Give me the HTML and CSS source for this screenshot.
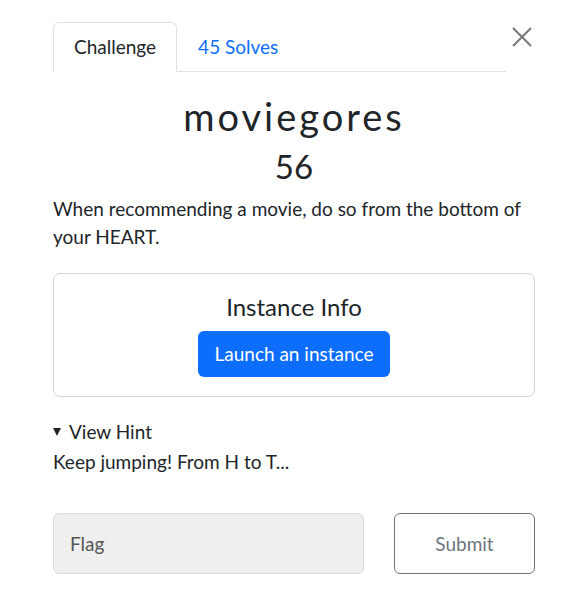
FILE: index.html
```html
<!DOCTYPE html>
<html>
<head>
<meta charset="utf-8">
<link rel="stylesheet" href="styles.css">
</head>
<body>
<div class="modal">
  <div class="top">
    <ul class="tabs">
      <li class="tab active">Challenge</li>
      <li class="tab link">45 Solves</li>
    </ul>
    <button class="close" aria-label="Close">
      <svg width="20" height="20" viewBox="0 0 20 20"><path d="M1 1 L19 19 M19 1 L1 19" stroke="#777" stroke-width="2" fill="none"/></svg>
    </button>
  </div>
  <h2 class="name">moviegores</h2>
  <h3 class="value">56</h3>
  <p class="desc">When recommending a movie, do so from the bottom of your HEART.</p>
  <div class="card">
    <h4 class="card-title">Instance Info</h4>
    <button class="btn-primary">Launch an instance</button>
  </div>
  <details class="hint" open>
    <summary>View Hint</summary>
    <p>Keep jumping! From H to T...</p>
  </details>
  <div class="submit-row">
    <div class="flag">Flag</div>
    <button class="btn-submit">Submit</button>
  </div>
</div>
</body>
</html>
```
FILE: styles.css
```css
html, body { margin: 0; padding: 0; background: #fff; }
body { font-family: Lato, "Open Sans", sans-serif; font-size: 19px; color: #212529; }
.modal { padding: 22px 45px 0 53px; }
.top { display: flex; align-items: flex-start; }
.tabs { list-style: none; margin: 0; padding: 0; display: flex; flex: 0 0 453px; border-bottom: 1px solid #dee2e6; }
.tab { padding: 10px 20px 11px; line-height: 27px; border: 1px solid transparent; margin-bottom: -1px; }
.tab.active { border-color: #dee2e6 #dee2e6 #fff; border-radius: 6px 6px 0 0; color: #212529; }
.tab.link { color: #0d6efd; }
.close { margin: 5px 0 0 6px; padding: 0; border: 0; background: none; width: 20px; height: 20px; display: block; }
.close svg { display: block; }
.name { margin: 22px 0 0; text-align: center; font-size: 38px; font-weight: 400; letter-spacing: 3px; line-height: 44px; }
.value { margin: 9px 0 0; text-align: center; font-size: 33px; font-weight: 400; line-height: 38px; }
.desc { margin: 10px 0 0; line-height: 28px; }
.card { margin-top: 22px; border: 1px solid #d3d3d3; border-radius: 7px; padding: 17px 16px 19px; display: flex; flex-direction: column; align-items: center; }
.card-title { margin: 0; font-size: 24px; font-weight: 400; line-height: 32px; }
.btn-primary { margin-top: 8px; background: #0d6efd; color: #fff; border: 0; border-radius: 6px; font-family: inherit; font-size: 19px; line-height: 28px; padding: 9px 16px; }
.hint { margin-top: 21px; }
.hint summary { line-height: 28px; cursor: pointer; list-style: none; display: flex; align-items: center; }
.hint summary::-webkit-details-marker { display: none; }
.hint summary::before { content: ""; width: 0; height: 0; border-left: 4.5px solid transparent; border-right: 4.5px solid transparent; border-top: 8px solid #212529; margin-right: 8px; }
.hint p { margin: 2px 0 0; line-height: 28px; }
.submit-row { display: flex; margin-top: 37px; gap: 30px; }
.flag { flex: 0 0 311px; box-sizing: border-box; height: 61px; background: #efefef; border: 1px solid #dcdcdc; border-radius: 6px; padding: 0 16px; line-height: 59px; color: #555; }
.btn-submit { flex: 0 0 141px; height: 61px; background: #fff; border: 1px solid #6c757d; border-radius: 6px; font-family: inherit; font-size: 19px; color: #6c757d; }
```
